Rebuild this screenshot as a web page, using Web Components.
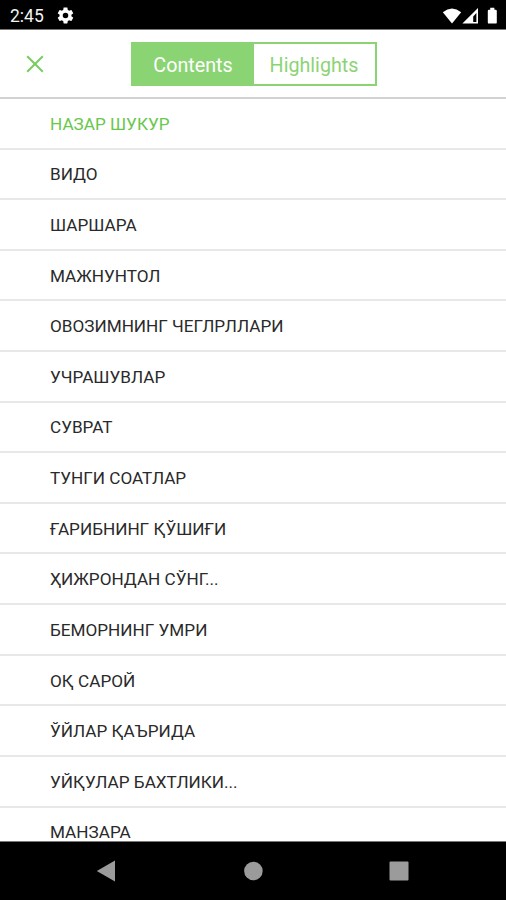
<!DOCTYPE html>
<html lang="uz">
<head>
<meta charset="utf-8">
<title>Contents</title>
<style>
    html, body { margin: 0; height: 100%; }
    body { background: #fff; overflow: hidden; }
</style>
</head>
<body>
<reader-screen>
    <status-bar slot="status" time="2:45"></status-bar>
    <toc-header slot="header">
        <toc-tab selected>Contents</toc-tab>
        <toc-tab>Highlights</toc-tab>
    </toc-header>
    <toc-item current>НАЗАР ШУКУР</toc-item>
    <toc-item>ВИДО</toc-item>
    <toc-item>ШАРШАРА</toc-item>
    <toc-item>МАЖНУНТОЛ</toc-item>
    <toc-item>ОВОЗИМНИНГ ЧЕГЛРЛЛАРИ</toc-item>
    <toc-item>УЧРАШУВЛАР</toc-item>
    <toc-item>СУВРАТ</toc-item>
    <toc-item>ТУНГИ СОАТЛАР</toc-item>
    <toc-item>ҒАРИБНИНГ ҚЎШИҒИ</toc-item>
    <toc-item>ҲИЖРОНДАН СЎНГ...</toc-item>
    <toc-item>БЕМОРНИНГ УМРИ</toc-item>
    <toc-item>ОҚ САРОЙ</toc-item>
    <toc-item>ЎЙЛАР ҚАЪРИДА</toc-item>
    <toc-item>УЙҚУЛАР БАХТЛИКИ...</toc-item>
    <toc-item>МАНЗАРА</toc-item>
    <nav-bar slot="nav"></nav-bar>
</reader-screen>

<script>
(()=>{
    function define(name, html) {
        customElements.define(name, class extends HTMLElement {
            constructor() {
                super();
                this.attachShadow({ mode: 'open' }).innerHTML = html;
            }
        });
    }

    define('reader-screen', `
<style>
    :host {
        display: flex;
        flex-direction: column;
        height: 900px;
        font-family: Roboto, "Noto Sans", sans-serif;
        color: #2a2a2a;
        --green: #8bd474;
    }
    main { flex: 1; min-height: 0; overflow: hidden; }
</style>
<slot name="status"></slot>
<slot name="header"></slot>
<main><slot></slot></main>
<slot name="nav"></slot>`);

    class StatusBar extends HTMLElement {
        connectedCallback() {
            this.attachShadow({ mode: 'open' }).innerHTML = `
<style>
    :host {
        display: flex;
        align-items: center;
        box-sizing: border-box;
        height: 30px;
        padding: 2px 7px 0 10px;
        background: #000;
        border-bottom: 1px solid #777;
        color: #f4f4f4;
        font-size: 17.5px;
    }
    svg { display: block; fill: #fff; }
    .gear { margin-left: 12px; }
    .right { margin-left: auto; }
</style>
<span>${this.getAttribute('time')}</span>
<svg class="gear" width="19" height="19" viewBox="0 0 24 24">
    <path d="M19.43 12.98c.04-.32.07-.64.07-.98s-.03-.66-.07-.98l2.11-1.65c.19-.15.24-.42.12-.64l-2-3.46c-.12-.22-.39-.3-.61-.22l-2.49 1c-.52-.4-1.08-.73-1.69-.98l-.38-2.65C14.46 2.18 14.25 2 14 2h-4c-.25 0-.46.18-.49.42l-.38 2.65c-.61.25-1.17.59-1.69.98l-2.49-1c-.23-.09-.49 0-.61.22l-2 3.46c-.13.22-.07.49.12.64l2.11 1.65c-.04.32-.07.65-.07.98s.03.66.07.98l-2.11 1.65c-.19.15-.24.42-.12.64l2 3.46c.12.22.39.3.61.22l2.49-1c.52.4 1.08.73 1.69.98l.38 2.65c.03.24.24.42.49.42h4c.25 0 .46-.18.49-.42l.38-2.65c.61-.25 1.17-.59 1.69-.98l2.49 1c.23.09.49 0 .61-.22l2-3.46c.12-.22.07-.49-.12-.64l-2.11-1.65zM12 15.5a3.5 3.5 0 1 1 0-7 3.5 3.5 0 0 1 0 7z"/>
</svg>
<svg class="right" width="57" height="20" viewBox="0 0 57 20">
    <path d="M.8 6.2Q10 -1 19.2 6.2L10 17.5z"/>
    <path fill-rule="evenodd" d="M36 2V17.6H20.4zM34.4 7L31.2 10.4V16.1H34.4z"/>
    <path d="M48.2 1.8h4.2v1.9h1.2q1.2 0 1.2 1.2v11.5q0 1.2-1.2 1.2h-6.6q-1.2 0-1.2-1.2V4.9q0-1.2 1.2-1.2h1.2z"/>
</svg>`;
        }
    }
    customElements.define('status-bar', StatusBar);

    define('toc-header', `
<style>
    :host {
        display: grid;
        grid-template-columns: 1fr 246px 1fr;
        align-items: center;
        box-sizing: border-box;
        height: 69px;
        padding: 1px 0 0 1px;
        border-bottom: 2px solid #d2d2d2;
    }
    svg { display: block; margin-left: 25px; }
    .tabs {
        display: grid;
        grid-template-columns: 1fr 1fr;
        box-sizing: border-box;
        height: 44px;
        border: 2px solid var(--green);
    }
</style>
<svg width="18" height="18" viewBox="0 0 18 18" fill="none">
    <path d="M1.2 1.2L16.8 16.8M16.8 1.2L1.2 16.8" stroke="#78cb62" stroke-width="2"/>
</svg>
<div class="tabs"><slot></slot></div>`);

    define('toc-tab', `
<style>
    :host {
        display: flex;
        align-items: center;
        justify-content: center;
        padding-top: 2px;
        font-size: 19.7px;
        color: var(--green);
    }
    :host([selected]) { background: var(--green); color: #fff; }
</style>
<slot></slot>`);

    define('toc-item', `
<style>
    :host {
        display: flex;
        align-items: center;
        box-sizing: border-box;
        height: 50.62px;
        padding: 1px 50px 0;
        border-bottom: 2px solid #e8e8e8;
        font-size: 17.15px;
        white-space: nowrap;
    }
    :host([current]) { color: #68c74c; }
</style>
<slot></slot>`);

    define('nav-bar', `
<style>
    :host {
        display: flex;
        align-items: center;
        justify-content: space-between;
        box-sizing: border-box;
        height: 59px;
        padding: 0 97px 0 96px;
        background: #000;
        border-top: 1px solid #777;
    }
    svg { display: block; fill: #9b9b9b; }
</style>
<svg width="20" height="22" viewBox="0 0 20 22"><path d="M.8 11L19 .5v21z"/></svg>
<svg width="20" height="20" viewBox="0 0 20 20"><circle cx="10.4" cy="10" r="9.3"/></svg>
<svg width="20" height="20" viewBox="0 0 20 20"><rect x=".5" y=".5" width="19" height="19" rx="1"/></svg>`);
})();
</script>
</body>
</html>
